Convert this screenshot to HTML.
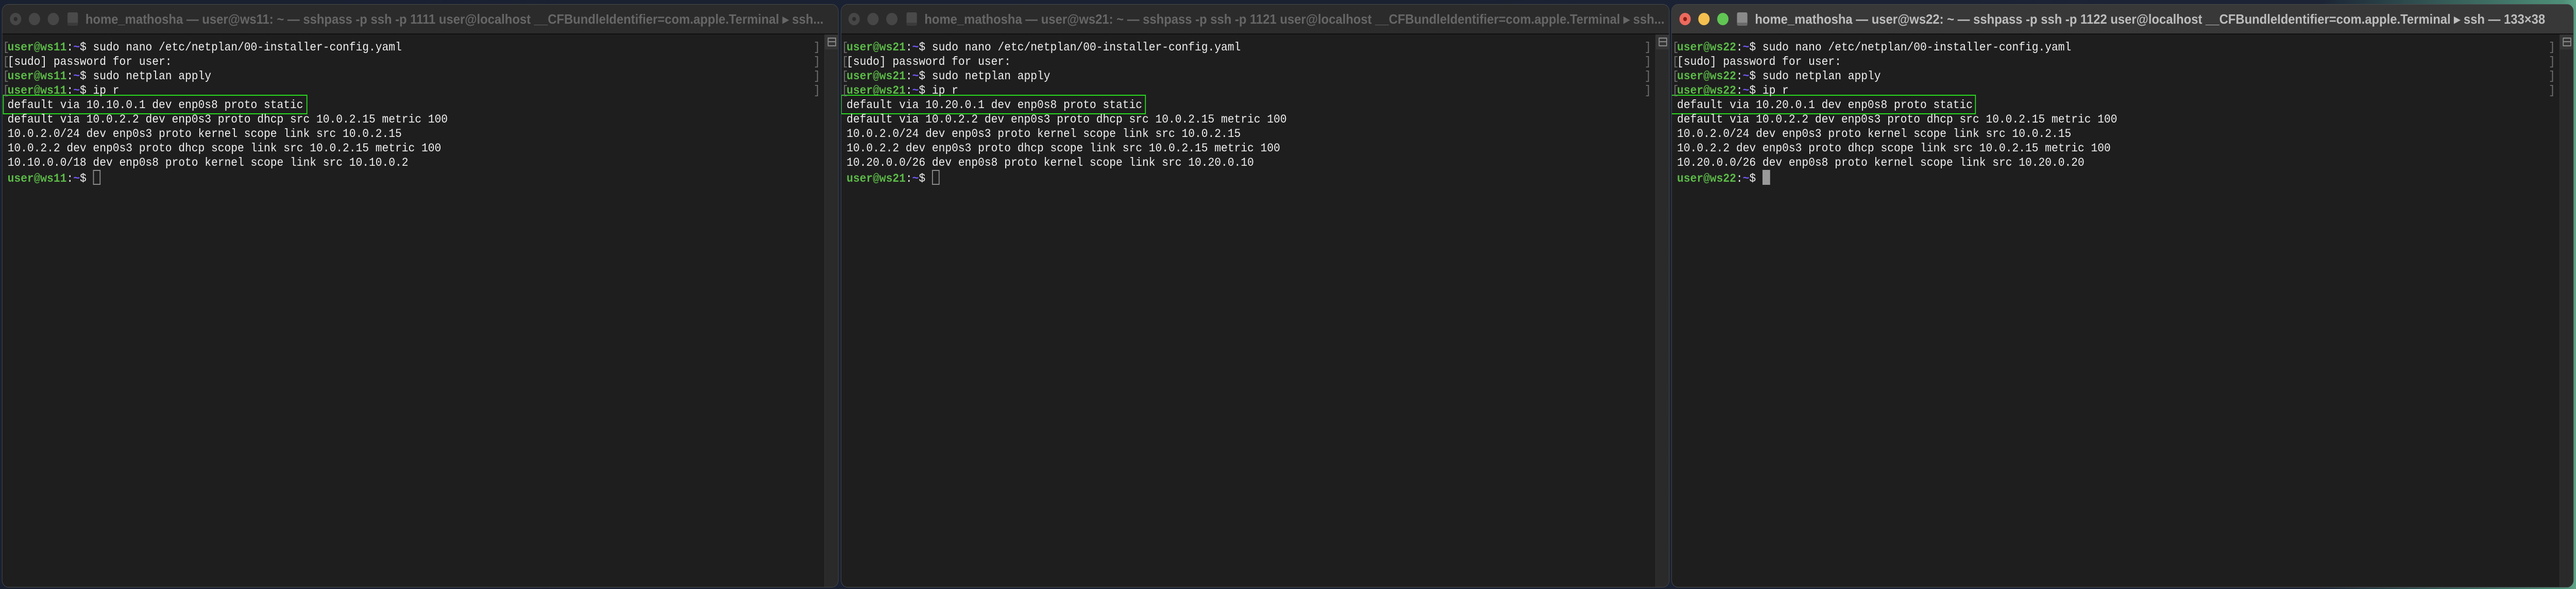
<!DOCTYPE html>
<html><head><meta charset="utf-8"><style>
html,body{margin:0;padding:0;overflow:hidden;background:#1a2030;}
#root{position:absolute;left:0;top:0;width:5456px;height:1144px;overflow:hidden;transform-origin:0 0;background:linear-gradient(90deg,#192030 0,#1b2334 90%,#4e8f78 99.5%,#5fa288 100%);}
.win{position:absolute;top:8px;bottom:3px;background:#1e1e1e;border:1px solid #4a4a4a;border-radius:14px;overflow:hidden;box-sizing:border-box;}
.tb{position:absolute;left:0;right:0;top:0;height:56px;background:#2b2b2b;border-bottom:2px solid #111;overflow:hidden;}
.act .tb{background:#383838;}
.dot{position:absolute;top:16px;width:24px;height:24px;border-radius:50%;background:#464646;}
.dot.d1::after{content:"";position:absolute;left:8px;top:8px;width:8px;height:8px;border-radius:50%;background:#2b2b2b;}
.act .dot.d1{background:#ec6a5e;} .act .dot.d1::after{background:#8a1f14;}
.act .dot.d2{background:#f4bf4f;} .act .dot.d3{background:#61c554;}
.ic{position:absolute;left:138px;top:15px;width:22px;height:26px;background:#4a4a4a;border-radius:3px;}
.ic::after{content:"";position:absolute;left:0;right:0;bottom:0;height:6px;background:#3a3a3a;border-radius:0 0 3px 3px;}
.act .ic{background:#8a8a8a;} .act .ic::after{background:#6a6a6a;}
.tt{position:absolute;left:176px;top:10px;font:bold 26px/36px "Liberation Sans",sans-serif;color:#666;white-space:nowrap;}
.act .tt{color:#bdbdbd;}
.sb{position:absolute;right:0;top:58px;bottom:0;width:28px;background:#2a2a2a;border-left:1px solid #333;}
.sb .cell{position:absolute;left:0;right:0;top:0;height:29px;background:#353535;}
.sb .cell i{position:absolute;left:6px;top:6px;width:14px;height:13px;border:2px solid #8a8a8a;border-radius:1px;}
.sb .cell i::after{content:"";position:absolute;left:0;right:0;top:5px;height:2px;background:#8a8a8a;}
.term{position:absolute;left:11px;top:69px;font:23.2px/28px "Liberation Mono",monospace;color:#efefef;}
.l{position:relative;height:28px;white-space:pre;}
.lb{position:absolute;left:-10px;color:#707070;}
.g{color:#5cbb48;font-weight:bold;} .t{color:#7357f0;font-weight:bold;}
.rb{position:absolute;right:38px;font:23.2px/28px "Liberation Mono",monospace;color:#707070;}
.box{position:absolute;left:1px;top:175px;height:38px;border:2px solid #29d91f;box-sizing:border-box;}
.cur{display:inline-block;width:12px;height:25px;border:2px solid #8a8a8a;vertical-align:-6px;}
.act .cur{background:#9a9a9a;border-color:#9a9a9a;}
</style></head><body><div id="root">

<div class="win" style="left:4px;width:1772px;">
 <div class="tb"><div class="dot d1" style="left:16px"></div><div class="dot d2" style="left:56px"></div><div class="dot d3" style="left:96px"></div><div class="ic"></div>
 <div class="tt">home_mathosha — user@ws11: ~ — sshpass -p ssh -p 1111 user@localhost __CFBundleIdentifier=com.apple.Terminal ▸ ssh...</div></div>
 <div class="sb"><div class="cell"><i></i></div></div>
 <div class="rb" style="top:69px">]</div><div class="rb" style="top:97px">]</div><div class="rb" style="top:125px">]</div><div class="rb" style="top:153px">]</div>
 <div class="box" style="width:645px"></div>
 <div class="term"><div class="l"><span class="lb">[</span><span class="g">user@ws11</span>:<span class="t">~</span>$ sudo nano /etc/netplan/00-installer-config.yaml</div><div class="l"><span class="lb">[</span>[sudo] password for user:</div><div class="l"><span class="lb">[</span><span class="g">user@ws11</span>:<span class="t">~</span>$ sudo netplan apply</div><div class="l"><span class="lb">[</span><span class="g">user@ws11</span>:<span class="t">~</span>$ ip r</div><div class="l">default via 10.10.0.1 dev enp0s8 proto static</div><div class="l">default via 10.0.2.2 dev enp0s3 proto dhcp src 10.0.2.15 metric 100</div><div class="l">10.0.2.0/24 dev enp0s3 proto kernel scope link src 10.0.2.15</div><div class="l">10.0.2.2 dev enp0s3 proto dhcp scope link src 10.0.2.15 metric 100</div><div class="l">10.10.0.0/18 dev enp0s8 proto kernel scope link src 10.10.0.2</div><div class="l"><span class="g">user@ws11</span>:<span class="t">~</span>$ <span class="cur"></span></div></div>
</div>

<div class="win" style="left:1781px;width:1755px;">
 <div class="tb"><div class="dot d1" style="left:15px"></div><div class="dot d2" style="left:55px"></div><div class="dot d3" style="left:95px"></div><div class="ic"></div>
 <div class="tt">home_mathosha — user@ws21: ~ — sshpass -p ssh -p 1121 user@localhost __CFBundleIdentifier=com.apple.Terminal ▸ ssh...</div></div>
 <div class="sb"><div class="cell"><i></i></div></div>
 <div class="rb" style="top:69px">]</div><div class="rb" style="top:97px">]</div><div class="rb" style="top:125px">]</div><div class="rb" style="top:153px">]</div>
 <div class="box" style="width:646px;left:-1px"></div>
 <div class="term"><div class="l"><span class="lb">[</span><span class="g">user@ws21</span>:<span class="t">~</span>$ sudo nano /etc/netplan/00-installer-config.yaml</div><div class="l"><span class="lb">[</span>[sudo] password for user:</div><div class="l"><span class="lb">[</span><span class="g">user@ws21</span>:<span class="t">~</span>$ sudo netplan apply</div><div class="l"><span class="lb">[</span><span class="g">user@ws21</span>:<span class="t">~</span>$ ip r</div><div class="l">default via 10.20.0.1 dev enp0s8 proto static</div><div class="l">default via 10.0.2.2 dev enp0s3 proto dhcp src 10.0.2.15 metric 100</div><div class="l">10.0.2.0/24 dev enp0s3 proto kernel scope link src 10.0.2.15</div><div class="l">10.0.2.2 dev enp0s3 proto dhcp scope link src 10.0.2.15 metric 100</div><div class="l">10.20.0.0/26 dev enp0s8 proto kernel scope link src 10.20.0.10</div><div class="l"><span class="g">user@ws21</span>:<span class="t">~</span>$ <span class="cur"></span></div></div>
</div>

<div class="win act" style="left:3540px;width:1911px;">
 <div class="tb"><div class="dot d1" style="left:16px"></div><div class="dot d2" style="left:56px"></div><div class="dot d3" style="left:96px"></div><div class="ic"></div>
 <div class="tt">home_mathosha — user@ws22: ~ — sshpass -p ssh -p 1122 user@localhost __CFBundleIdentifier=com.apple.Terminal ▸ ssh — 133×38</div></div>
 <div class="sb"><div class="cell"><i></i></div></div>
 <div class="rb" style="top:69px">]</div><div class="rb" style="top:97px">]</div><div class="rb" style="top:125px">]</div><div class="rb" style="top:153px">]</div>
 <div class="box" style="width:646px;left:-2px"></div>
 <div class="term"><div class="l"><span class="lb">[</span><span class="g">user@ws22</span>:<span class="t">~</span>$ sudo nano /etc/netplan/00-installer-config.yaml</div><div class="l"><span class="lb">[</span>[sudo] password for user:</div><div class="l"><span class="lb">[</span><span class="g">user@ws22</span>:<span class="t">~</span>$ sudo netplan apply</div><div class="l"><span class="lb">[</span><span class="g">user@ws22</span>:<span class="t">~</span>$ ip r</div><div class="l">default via 10.20.0.1 dev enp0s8 proto static</div><div class="l">default via 10.0.2.2 dev enp0s3 proto dhcp src 10.0.2.15 metric 100</div><div class="l">10.0.2.0/24 dev enp0s3 proto kernel scope link src 10.0.2.15</div><div class="l">10.0.2.2 dev enp0s3 proto dhcp scope link src 10.0.2.15 metric 100</div><div class="l">10.20.0.0/26 dev enp0s8 proto kernel scope link src 10.20.0.20</div><div class="l"><span class="g">user@ws22</span>:<span class="t">~</span>$ <span class="cur"></span></div></div>
</div>

</div>
<script>
(function(){var r=document.getElementById('root');var sx=window.innerWidth/5456,sy=window.innerHeight/1144;if(Math.abs(sx-1)>0.001||Math.abs(sy-1)>0.001){r.style.transform='scale('+sx+','+sy+')';}})();
</script>
</body></html>
